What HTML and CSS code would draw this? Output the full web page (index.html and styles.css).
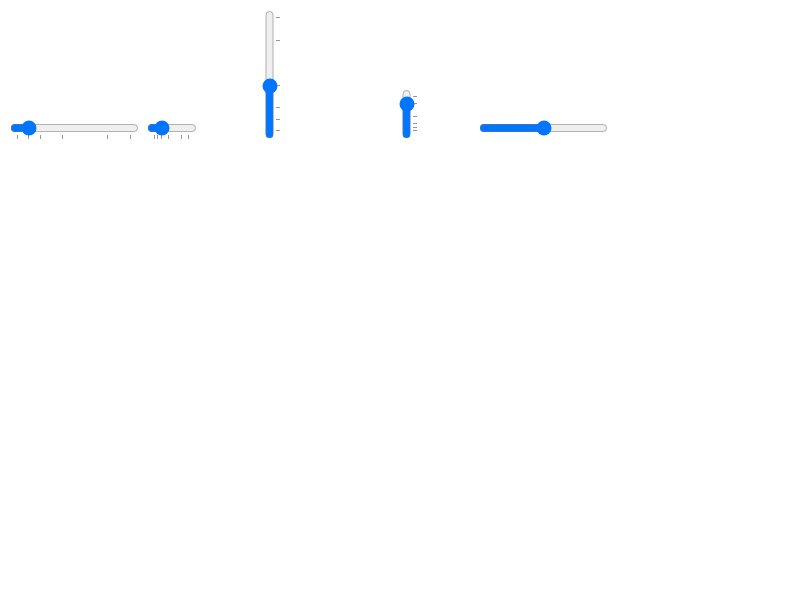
FILE: index.html
```html
<!DOCTYPE html>
<html lang="en">
<head>
<meta charset="utf-8">
<title>Range sliders</title>
<link rel="stylesheet" href="styles.css">
</head>
<body>
<main class="sliders">
  <input class="slider" type="range" min="0" max="100" value="10" list="stops" aria-label="Horizontal">
  <input class="slider short" type="range" min="0" max="100" value="20" list="stops" aria-label="Short horizontal">
  <input class="slider vertical" type="range" min="0" max="100" value="40" list="stops" aria-label="Vertical">
  <input class="slider vertical low" type="range" min="0" max="100" value="80" list="stops" aria-label="Short vertical">
  <input class="slider" type="range" min="0" max="100" value="50" aria-label="Without stops">
</main>
<datalist id="stops">
  <option value="0"></option>
  <option value="10"></option>
  <option value="20"></option>
  <option value="40"></option>
  <option value="80"></option>
  <option value="100"></option>
</datalist>
</body>
</html>
```
FILE: styles.css
```css
body {
  margin: 8px;
  background: #fff;
}

.sliders {
  display: flex;
  flex-wrap: wrap;
  align-items: flex-end;
  gap: 4px;
}

.slider {
  box-sizing: border-box;
  width: 129px;
  height: 16px;
  margin: 2px 2px 5px;
}

.short {
  width: 50px;
}

.vertical {
  writing-mode: vertical-lr;
  direction: rtl;
  height: 129px;
  margin: 2px;
}

.low {
  height: 50px;
}
```
